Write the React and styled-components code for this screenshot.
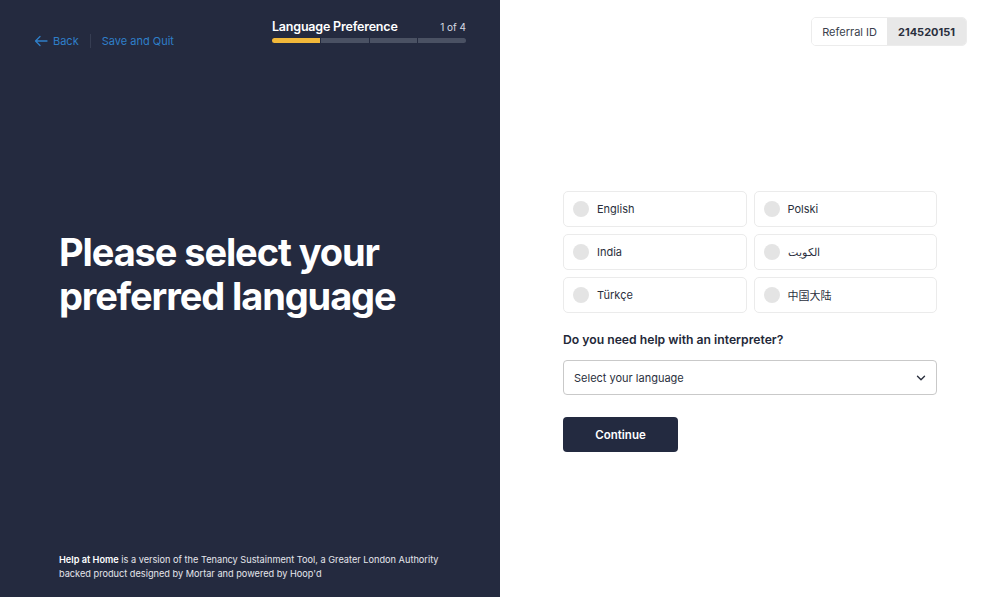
import React from 'react'
import styled, { createGlobalStyle } from 'styled-components'

const GlobalStyle = createGlobalStyle`
  html, body { margin: 0; padding: 0; }
  body { font-family: Inter, "Noto Sans", sans-serif; }
  * { box-sizing: border-box; }
`

const Page = styled.div`
  display: flex;
  width: 1000px;
  height: 597px;
  overflow: hidden;
`

const LeftPanel = styled.div`
  width: 500px;
  background: #242a3f;
  color: #fff;
  display: flex;
  flex-direction: column;
  padding: 19px 34px 16px 34px;
`

const TopBar = styled.div`
  display: flex;
  align-items: flex-start;
  justify-content: space-between;
`

const NavLinks = styled.div`
  display: flex;
  align-items: center;
  margin-top: 15px;
  font-size: 11px;
  color: #2f7fc9;
`

const NavLink = styled.span`
  display: flex;
  align-items: center;
  gap: 5px;
  cursor: pointer;
`

const Divider = styled.span`
  width: 1px;
  height: 14px;
  background: #363d52;
  margin: 0 11px;
`

const Progress = styled.div`
  width: 194px;
`

const ProgressHead = styled.div`
  display: flex;
  justify-content: space-between;
  align-items: baseline;
`

const ProgressTitle = styled.span`
  font-size: 12.5px;
  font-weight: 600;
  letter-spacing: -0.2px;
`

const ProgressCount = styled.span`
  font-size: 10px;
  color: #d8dbe3;
`

const Bar = styled.div`
  display: flex;
  gap: 1px;
  margin-top: 4px;
  height: 5px;
  border-radius: 3px;
  overflow: hidden;
`

const Segment = styled.div`
  flex: 1;
  background: ${p => (p.$active ? '#f1b83a' : '#4a5163')};
`

const Hero = styled.div`
  flex: 1;
  display: flex;
  align-items: center;
  padding-left: 25px;
  padding-bottom: 54px;
`

const Headline = styled.h1`
  margin: 0;
  font-size: 38px;
  line-height: 44px;
  font-weight: 700;
  letter-spacing: -1.1px;
`

const Footer = styled.p`
  margin: 0 0 0 25px;
  font-size: 9.2px;
  line-height: 14px;
  color: #e4e6ec;
  b { font-weight: 600; color: #fff; }
`

const RightPanel = styled.div`
  flex: 1;
  background: #fff;
  display: flex;
  flex-direction: column;
  padding: 17px 33px 0 63px;
`

const RefRow = styled.div`
  display: flex;
  justify-content: flex-end;
`

const RefPill = styled.div`
  display: flex;
  height: 29px;
  border: 1px solid #ececec;
  border-radius: 5px;
  overflow: hidden;
  font-size: 11px;
`

const RefLabel = styled.span`
  display: flex;
  align-items: center;
  padding: 0 10px;
  color: #3a3f4d;
  background: #fff;
`

const RefValue = styled.span`
  display: flex;
  align-items: center;
  padding: 0 11px;
  background: #e8e8e8;
  font-weight: 700;
  color: #2a2f3d;
`

const Form = styled.div`
  width: 374px;
  margin-top: 145px;
`

const Options = styled.div`
  display: grid;
  grid-template-columns: 1fr 1fr;
  gap: 7px 7px;
`

const Option = styled.label`
  display: flex;
  align-items: center;
  gap: 8px;
  height: 36px;
  padding: 0 9px;
  border: 1px solid #ebebeb;
  border-radius: 5px;
  font-size: 11px;
  color: #2a2f3d;
  font-family: Inter, "Noto Sans", "Noto Sans CJK SC", sans-serif;
  cursor: pointer;
`

const Radio = styled.span`
  width: 16px;
  height: 16px;
  border-radius: 50%;
  background: #e4e4e4;
  flex-shrink: 0;
`

const Question = styled.div`
  margin-top: 19px;
  font-size: 12.2px;
  font-weight: 600;
  color: #232838;
`

const Select = styled.div`
  margin-top: 13px;
  height: 35px;
  display: flex;
  align-items: center;
  justify-content: space-between;
  padding: 0 10px;
  border: 1px solid #c9c9c9;
  border-radius: 4px;
  font-size: 11px;
  color: #2a2f3d;
`

const Button = styled.button`
  margin-top: 22px;
  width: 115px;
  height: 35px;
  border: none;
  border-radius: 4px;
  background: #232a40;
  color: #fff;
  font-family: Inter, sans-serif;
  font-size: 11.5px;
  font-weight: 600;
  cursor: pointer;
`

const languages = ['English', 'Polski', 'India', 'الكويت', 'Türkçe', '中国大陆']

export default function App() {
  return (
    <>
      <GlobalStyle />
      <Page>
        <LeftPanel>
          <TopBar>
            <NavLinks>
              <NavLink>
                <svg width="14" height="12" viewBox="0 0 14 12" fill="none" stroke="#2f7fc9" strokeWidth="1.3" strokeLinecap="round" strokeLinejoin="round">
                  <path d="M13 6H1.5M6 1.5L1.5 6 6 10.5" />
                </svg>
                Back
              </NavLink>
              <Divider />
              <NavLink>Save and Quit</NavLink>
            </NavLinks>
            <Progress>
              <ProgressHead>
                <ProgressTitle>Language Preference</ProgressTitle>
                <ProgressCount>1 of 4</ProgressCount>
              </ProgressHead>
              <Bar>
                <Segment $active />
                <Segment />
                <Segment />
                <Segment />
              </Bar>
            </Progress>
          </TopBar>
          <Hero>
            <Headline>Please select your<br />preferred language</Headline>
          </Hero>
          <Footer>
            <b>Help at Home</b> is a version of the Tenancy Sustainment Tool, a Greater London Authority<br />
            backed product designed by Mortar and powered by Hoop'd
          </Footer>
        </LeftPanel>
        <RightPanel>
          <RefRow>
            <RefPill>
              <RefLabel>Referral ID</RefLabel>
              <RefValue>214520151</RefValue>
            </RefPill>
          </RefRow>
          <Form>
            <Options>
              {languages.map(l => (
                <Option key={l}>
                  <Radio />
                  {l}
                </Option>
              ))}
            </Options>
            <Question>Do you need help with an interpreter?</Question>
            <Select>
              Select your language
              <svg width="10" height="6" viewBox="0 0 10 6" fill="none" stroke="#2a2f3d" strokeWidth="1.4" strokeLinecap="round" strokeLinejoin="round">
                <path d="M1.5 1.2L5 4.7 8.5 1.2" />
              </svg>
            </Select>
            <Button>Continue</Button>
          </Form>
        </RightPanel>
      </Page>
    </>
  )
}
